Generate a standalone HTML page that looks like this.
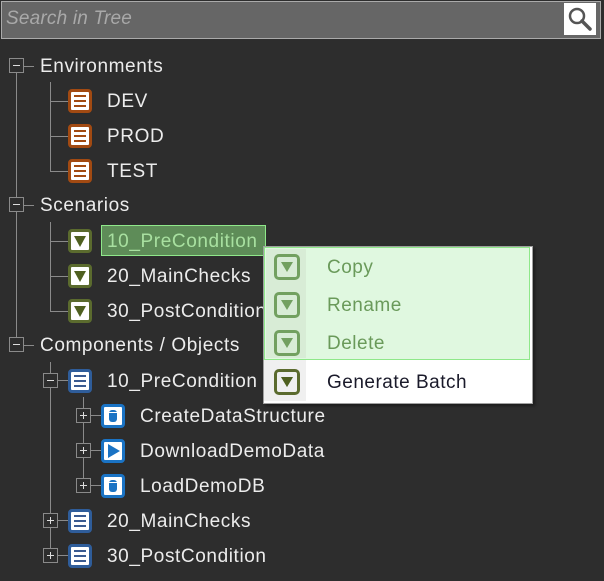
<!DOCTYPE html>
<html><head><meta charset="utf-8"><style>
body{margin:0;width:604px;height:581px;background:#2d2d2d;overflow:hidden;position:relative;font-family:"Segoe UI","Liberation Sans",sans-serif;}
.a{position:absolute}
.t{position:absolute;font-size:19px;letter-spacing:0.6px;color:#ececec;line-height:24px;white-space:nowrap}
.vl{position:absolute;width:1px;background:#8a8a8a}
.hl{position:absolute;height:1px;background:#8a8a8a}
.bx{position:absolute;width:13px;height:13px;border:1px solid #8a8a8a;background:#2d2d2d}
.bx:before{content:"";position:absolute;left:3px;top:6px;width:7px;height:1px;background:#ddd}
.bx.p:after{content:"";position:absolute;left:6px;top:3px;width:1px;height:7px;background:#ddd}
.ic{position:absolute;width:18px;height:18px;border:3px solid;border-radius:4px;background:#fff}
.env{border-color:#a24a12}
.env i,.doc i{position:absolute;left:3px;width:12px;height:2px;background:#a24a12}
.doc{border-color:#2f5d9a}
.doc i{background:#3a5a90}
.sc{border-color:#5b6b2e}
.sc:after{content:"";position:absolute;left:3px;top:4px;border-left:6px solid transparent;border-right:6px solid transparent;border-top:11px solid #4f6020}
.db{border-color:#1a73c4}
.db:after{content:"";position:absolute;left:5px;top:3px;width:8px;height:12px;background:#1a73c4;border-radius:3px}
.db:before{content:"";position:absolute;left:5px;top:5px;width:8px;height:1px;background:#fff;z-index:1}
.pl{border-color:#1a73c4}
.pl:after{content:"";position:absolute;left:4px;top:2px;border-top:7px solid transparent;border-bottom:7px solid transparent;border-left:12px solid #1a73c4}
.mi{position:absolute;width:20px;height:20px;border:3px solid #72a060;border-radius:5px}
.mi:after{content:"";position:absolute;left:4px;top:5px;border-left:6px solid transparent;border-right:6px solid transparent;border-top:10px solid #72a060}
.mt{position:absolute;left:327px;font-size:19px;letter-spacing:0.5px;line-height:24px;color:#6a9a5a;white-space:nowrap}
</style></head><body>
<div class="a" style="left:1px;top:1px;width:598px;height:36px;background:#666;border:1px solid #aaa"></div>
<div class="a" style="left:6px;top:8px;font-size:19px;font-style:italic;color:#a9a9a9;font-family:'Liberation Sans',sans-serif;letter-spacing:0.2px">Search in Tree</div>
<div class="a" style="left:564px;top:3px;width:32px;height:32px;background:#fff"></div>
<svg class="a" style="left:566px;top:5px" width="28" height="28"><circle cx="11" cy="11" r="7" fill="none" stroke="#555" stroke-width="2.5"/><line x1="16" y1="16" x2="24" y2="24" stroke="#555" stroke-width="3.5" stroke-linecap="round"/></svg>

<div class="vl" style="left:16px;top:73px;height:273px"></div>
<div class="hl" style="left:24px;top:66px;width:10px"></div>
<div class="hl" style="left:24px;top:205px;width:10px"></div>
<div class="hl" style="left:24px;top:345px;width:10px"></div>
<div class="bx" style="left:9px;top:58px"></div>
<div class="bx" style="left:9px;top:197px"></div>
<div class="bx" style="left:9px;top:337px"></div>
<div class="t" style="left:40px;top:55px">Environments</div>
<div class="t" style="left:40px;top:194px">Scenarios</div>
<div class="t" style="left:40px;top:334px">Components / Objects</div>

<div class="vl" style="left:50px;top:82px;height:89px"></div>
<div class="hl" style="left:50px;top:101px;width:18px"></div>
<div class="hl" style="left:50px;top:136px;width:18px"></div>
<div class="hl" style="left:50px;top:171px;width:18px"></div>
<div class="ic env" style="left:68px;top:89px"><i style="top:3px"></i><i style="top:8px"></i><i style="top:13px"></i></div>
<div class="ic env" style="left:68px;top:124px"><i style="top:3px"></i><i style="top:8px"></i><i style="top:13px"></i></div>
<div class="ic env" style="left:68px;top:159px"><i style="top:3px"></i><i style="top:8px"></i><i style="top:13px"></i></div>
<div class="t" style="left:107px;top:90px">DEV</div>
<div class="t" style="left:107px;top:125px">PROD</div>
<div class="t" style="left:107px;top:160px">TEST</div>

<div class="vl" style="left:50px;top:222px;height:89px"></div>
<div class="hl" style="left:50px;top:241px;width:18px"></div>
<div class="hl" style="left:50px;top:276px;width:18px"></div>
<div class="hl" style="left:50px;top:311px;width:18px"></div>
<div class="ic sc" style="left:68px;top:229px"></div>
<div class="ic sc" style="left:68px;top:264px"></div>
<div class="ic sc" style="left:68px;top:299px"></div>
<div class="a" style="left:101px;top:225px;width:163px;height:29px;background:#5e8c58;border:1px solid #8fe88a"></div>
<div class="t" style="left:107px;top:230px;color:#a8e0a0">10_PreCondition</div>
<div class="t" style="left:107px;top:265px">20_MainChecks</div>
<div class="t" style="left:107px;top:300px">30_PostCondition</div>

<div class="vl" style="left:50px;top:362px;height:194px"></div>
<div class="hl" style="left:57px;top:380px;width:12px"></div>
<div class="hl" style="left:57px;top:520px;width:12px"></div>
<div class="hl" style="left:57px;top:555px;width:12px"></div>
<div class="bx" style="left:43px;top:373px"></div>
<div class="bx p" style="left:43px;top:513px"></div>
<div class="bx p" style="left:43px;top:548px"></div>
<div class="ic doc" style="left:68px;top:369px"><i style="top:3px"></i><i style="top:8px"></i><i style="top:13px"></i></div>
<div class="ic doc" style="left:68px;top:509px"><i style="top:3px"></i><i style="top:8px"></i><i style="top:13px"></i></div>
<div class="ic doc" style="left:68px;top:544px"><i style="top:3px"></i><i style="top:8px"></i><i style="top:13px"></i></div>
<div class="t" style="left:107px;top:370px">10_PreCondition</div>
<div class="t" style="left:107px;top:510px">20_MainChecks</div>
<div class="t" style="left:107px;top:545px">30_PostCondition</div>

<div class="vl" style="left:83px;top:397px;height:82px"></div>
<div class="hl" style="left:90px;top:415px;width:12px"></div>
<div class="hl" style="left:90px;top:450px;width:12px"></div>
<div class="hl" style="left:90px;top:485px;width:12px"></div>
<div class="bx p" style="left:76px;top:408px"></div>
<div class="bx p" style="left:76px;top:443px"></div>
<div class="bx p" style="left:76px;top:478px"></div>
<div class="ic db" style="left:101px;top:404px"></div>
<div class="ic pl" style="left:101px;top:439px"></div>
<div class="ic db" style="left:101px;top:474px"></div>
<div class="t" style="left:140px;top:405px">CreateDataStructure</div>
<div class="t" style="left:140px;top:440px">DownloadDemoData</div>
<div class="t" style="left:140px;top:475px">LoadDemoDB</div>

<div class="a" style="left:263px;top:246px;width:268px;height:156px;background:#fff;border:1px solid #a0a0a0;box-shadow:2px 2px 3px rgba(0,0,0,.4)"></div>
<div class="a" style="left:264px;top:247px;width:42px;height:154px;background:#f0f0f0"></div>
<div class="a" style="left:264px;top:247px;width:266px;height:113px;background:#e0f8e0;border:1px solid #8fe88a;box-sizing:border-box"></div>
<div class="a" style="left:266px;top:249px;width:40px;height:109px;background:#d8ecd6"></div>
<div class="mi" style="left:274px;top:254px"></div>
<div class="mi" style="left:274px;top:292px"></div>
<div class="mi" style="left:274px;top:330px"></div>
<div class="mi" style="left:274px;top:369px;border-color:#5b6b2e"></div>
<div class="a" style="left:281px;top:377px;border-left:6px solid transparent;border-right:6px solid transparent;border-top:10px solid #4f6020"></div>
<div class="mt" style="top:256px">Copy</div>
<div class="mt" style="top:294px">Rename</div>
<div class="mt" style="top:332px">Delete</div>
<div class="mt" style="top:371px;color:#1a1a2a">Generate Batch</div>
</body></html>
